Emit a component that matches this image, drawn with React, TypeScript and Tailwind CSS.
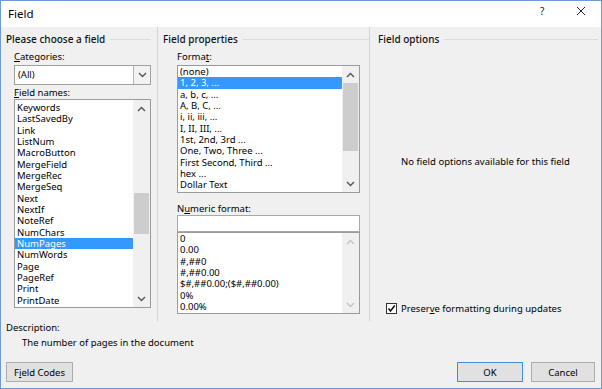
import React from "react";

const ROW = "h-[11.33px] leading-[11.33px] whitespace-nowrap";

function Chev({ up, light }: { up?: boolean; light?: boolean }) {
  return (
    <svg width="9" height="6" viewBox="0 0 9 6">
      <polyline
        points={up ? "1,5 4.5,1.5 8,5" : "1,1 4.5,4.5 8,1"}
        fill="none"
        stroke={light ? "#c4c4c4" : "#555555"}
        strokeWidth="1.4"
      />
    </svg>
  );
}

function ScrollBar({
  thumbTop,
  thumbH,
  disabled,
}: {
  thumbTop?: number;
  thumbH?: number;
  disabled?: boolean;
}) {
  return (
    <div className="w-[17px] h-full bg-[#f0f0f0] flex flex-col shrink-0">
      <div className="h-[17px] flex items-center justify-center shrink-0">
        <Chev up light={disabled} />
      </div>
      <div className="flex-1 relative">
        {!disabled && (
          <div
            className="absolute left-[1px] right-[1px] bg-[#cdcdcd]"
            style={{ top: thumbTop, height: thumbH }}
          />
        )}
      </div>
      <div className="h-[17px] flex items-center justify-center shrink-0">
        <Chev light={disabled} />
      </div>
    </div>
  );
}

function GroupHeader({ title, pl, mr }: { title: string; pl: string; mr: string }) {
  return (
    <div className={`h-[14px] mt-[5px] flex items-center ${pl} ${mr}`}>
      <span className="font-medium text-[10px] text-[#111] leading-[14px] whitespace-nowrap">{title}</span>
      <div className="flex-1 h-px bg-[#dcdcdc] ml-[5px]" />
    </div>
  );
}

function ListBox({
  items,
  selected,
  w,
  h,
  pt,
  thumbTop,
  thumbH,
  disabled,
}: {
  items: string[];
  selected: number;
  w: string;
  h: string;
  pt: string;
  thumbTop?: number;
  thumbH?: number;
  disabled?: boolean;
}) {
  return (
    <div className={`${w} ${h} border border-[#9b9b9b] bg-white flex shrink-0`}>
      <div className={`flex-1 flex flex-col overflow-hidden ${pt}`}>
        {items.map((it, i) => (
          <div
            key={i}
            className={`${ROW} pl-[2px] ${i === selected ? "bg-[#3399ff] text-white" : ""}`}
          >
            {it}
          </div>
        ))}
      </div>
      <ScrollBar thumbTop={thumbTop} thumbH={thumbH} disabled={disabled} />
    </div>
  );
}

export default function App() {
  const fieldNames = [
    "Keywords",
    "LastSavedBy",
    "Link",
    "ListNum",
    "MacroButton",
    "MergeField",
    "MergeRec",
    "MergeSeq",
    "Next",
    "NextIf",
    "NoteRef",
    "NumChars",
    "NumPages",
    "NumWords",
    "Page",
    "PageRef",
    "Print",
    "PrintDate",
  ];
  const formats = [
    "(none)",
    "1, 2, 3, ...",
    "a, b, c, ...",
    "A, B, C, ...",
    "i, ii, iii, ...",
    "I, II, III, ...",
    "1st, 2nd, 3rd ...",
    "One, Two, Three ...",
    "First Second, Third ...",
    "hex ...",
    "Dollar Text",
  ];
  const numeric = ["0", "0.00", "#,##0", "#,##0.00", "$#,##0.00;($#,##0.00)", "0%", "0.00%"];

  return (
    <div className="w-[602px] h-[389px] border border-[#6e9bd4] bg-[#f0f0f0] flex flex-col font-['Noto_Sans',sans-serif] text-[9.5px] text-black overflow-hidden">
      {/* Title bar */}
      <div className="h-[26px] bg-white flex shrink-0 relative">
        <div className="pl-[7px] pt-[6px] text-[11.5px] leading-[14px] text-black">Field</div>
        <div className="flex-1" />
        <div className="pt-[3px] w-[10px] text-[10px] leading-[14px] text-[#222] mr-[26px]">?</div>
        <div className="pt-[5px] mr-[15px]">
          <svg width="10" height="10" viewBox="0 0 10 10">
            <path d="M1 1 L9 9 M9 1 L1 9" stroke="#222" strokeWidth="1" />
          </svg>
        </div>
      </div>

      {/* Body columns */}
      <div className="h-[294px] flex shrink-0">
        {/* Left */}
        <div className="w-[156px] flex flex-col shrink-0">
          <GroupHeader title="Please choose a field" pl="pl-[5px]" mr="mr-[6px]" />
          <div className="mt-[4px] h-[13px] leading-[13px] pl-[13px]">
            <span className="underline">C</span>ategories:
          </div>
          <div className="mt-[2px] ml-[13px] w-[137px] h-[20px] border border-[#a0a0a0] bg-white flex">
            <div className="flex-1 pl-[3px] leading-[18px]">(All)</div>
            <div className="w-[17px] h-full border-l border-[#b5b5b5] bg-[#f2f2f2] flex items-center justify-center">
              <Chev />
            </div>
          </div>
          <div className="mt-[1px] h-[13px] leading-[13px] pl-[13px]">
            <span className="underline">F</span>ield names:
          </div>
          <div className="ml-[13px]">
            <ListBox
              items={fieldNames}
              selected={12}
              w="w-[137px]"
              h="h-[209px]"
              pt="pt-[2px]"
              thumbTop={76}
              thumbH={41}
            />
          </div>
        </div>
        <div className="w-px bg-[#d4d4d4] shrink-0" />

        {/* Middle */}
        <div className="w-[211px] flex flex-col shrink-0">
          <GroupHeader title="Field properties" pl="pl-[5px]" mr="mr-[0px]" />
          <div className="mt-[4px] h-[13px] leading-[13px] pl-[19px]">
            Forma<span className="underline">t</span>:
          </div>
          <div className="mt-[2px] ml-[19px]">
            <ListBox
              items={formats}
              selected={1}
              w="w-[183px]"
              h="h-[128px]"
              pt="pt-0"
              thumbTop={0}
              thumbH={68}
            />
          </div>
          <div className="mt-[9px] h-[13px] leading-[13px] pl-[19px]">
            N<span className="underline">u</span>meric format:
          </div>
          <div className="ml-[19px] w-[183px] h-[17px] border border-[#a8a8a8] bg-white shrink-0" />
          <div className="ml-[19px]">
            <ListBox
              items={numeric}
              selected={-1}
              w="w-[183px]"
              h="h-[82px]"
              pt="pt-0"
              disabled
            />
          </div>
        </div>
        <div className="w-px bg-[#d4d4d4] shrink-0" />

        {/* Right */}
        <div className="flex-1 flex flex-col">
          <GroupHeader title="Field options" pl="pl-[8px]" mr="mr-[3px]" />
          <div className="mt-[109px] h-[13px] leading-[13px] text-center">
            No field options available for this field
          </div>
          <div className="mt-[134px] h-[13px] flex items-center pl-[16px]">
            <div className="w-[11px] h-[11px] border border-[#333] bg-white flex items-center justify-center">
              <svg width="9" height="9" viewBox="0 0 9 9">
                <polyline points="1.5,4.5 3.5,7 7.8,1.5" fill="none" stroke="#111" strokeWidth="1.6" />
              </svg>
            </div>
            <span className="ml-[4px] leading-[13px]">
              Preser<span className="underline">v</span>e formatting during updates
            </span>
          </div>
        </div>
      </div>

      {/* Description */}
      <div className="h-[13px] leading-[13px] pl-[5px] shrink-0">Description:</div>
      <div className="mt-[2px] h-[13px] leading-[13px] pl-[21px] shrink-0">
        The number of pages in the document
      </div>

      {/* Buttons */}
      <div className="mt-[13px] flex px-[5px] shrink-0">
        <div className="w-[67px] h-[20px] border border-[#adadad] bg-[#e1e1e1] flex items-center justify-center leading-[13px]">
          F<span className="underline">i</span>eld Codes
        </div>
        <div className="flex-1" />
        <div className="w-[66px] h-[20px] border border-[#3d8ee0] bg-[#e1e1e1] flex items-center justify-center leading-[13px]">
          OK
        </div>
        <div className="w-[64px] h-[20px] ml-[8px] mr-[1px] border border-[#adadad] bg-[#e1e1e1] flex items-center justify-center leading-[13px]">
          Cancel
        </div>
      </div>
    </div>
  );
}
